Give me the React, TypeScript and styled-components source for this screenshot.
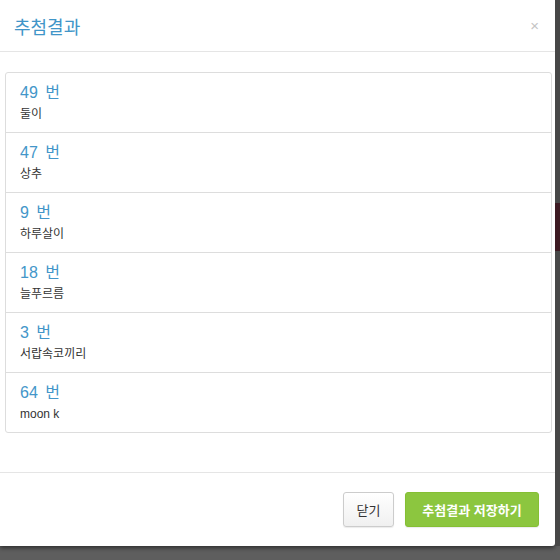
import React from "react";
import styled, { createGlobalStyle } from "styled-components";

const Global = createGlobalStyle`
  html, body { margin: 0; padding: 0; }
  body {
    width: 560px;
    height: 560px;
    overflow: hidden;
    background: #5c5c5c;
    font-family: "Liberation Sans", "Noto Sans CJK KR", sans-serif;
  }
`;

const Backdrop = styled.div`
  display: flex;
  align-items: flex-start;
  width: 560px;
  height: 560px;
  background: #5e5e5e;
`;

const Modal = styled.div`
  width: 555px;
  height: 546px;
  background: #fff;
  display: flex;
  flex-direction: column;
  border-bottom-right-radius: 3px;
  box-shadow: 0 2px 4px rgba(0, 0, 0, 0.5);
  flex-shrink: 0;
`;

const Side = styled.div`
  flex: 1;
  height: 546px;
  background: #474747;
  display: flex;
  flex-direction: column;
`;

const SideBand = styled.div`
  margin-top: 203px;
  height: 48px;
  background: #3d1a22;
`;

const Header = styled.div`
  height: 51px;
  border-bottom: 1px solid #e5e5e5;
  display: flex;
  align-items: center;
  justify-content: space-between;
  padding: 0 16px 0 14px;
`;

const Title = styled.h4`
  margin: 0;
  font-size: 18px;
  font-weight: normal;
  color: #4095c8;
`;

const Close = styled.span`
  font-size: 15px;
  color: #c4c4c4;
  line-height: 1;
`;

const Body = styled.div`
  padding: 20px 3px 39px 5px;
`;

const List = styled.div`
  display: flex;
  flex-direction: column;
  border-radius: 3px;
  border: 1px solid #dddddd;
`;

const Item = styled.div<{ $last?: boolean }>`
  height: ${(p) => (p.$last ? "59px" : "60px")};
  box-sizing: border-box;
  padding: 9px 14px 0;
  border-bottom: ${(p) => (p.$last ? "none" : "1px solid #dddddd")};
  display: flex;
  flex-direction: column;
`;

const Num = styled.div`
  font-size: 16px;
  color: #4396c9;
  line-height: 22px;
  word-spacing: 3px;
`;

const Name = styled.div`
  font-size: 12px;
  color: #333;
  line-height: 18px;
  margin-top: 1px;
`;

const Footer = styled.div`
  border-top: 1px solid #e5e5e5;
  flex: 1;
  display: flex;
  justify-content: flex-end;
  align-items: flex-start;
  padding: 19px 16px 0 0;
  gap: 11px;
`;

const Button = styled.button<{ $primary?: boolean; $w: number }>`
  width: ${(p) => p.$w}px;
  height: 35px;
  padding: 0;
  border-radius: 3px;
  font-family: "Liberation Sans", "Noto Sans CJK KR", sans-serif;
  font-size: 13px;
  font-weight: ${(p) => (p.$primary ? "bold" : "normal")};
  border: 1px solid ${(p) => (p.$primary ? "#85bf34" : "#cccccc")};
  background: ${(p) => (p.$primary ? "#8cc63f" : "linear-gradient(#ffffff, #f0f0f0)")};
  color: ${(p) => (p.$primary ? "#ffffff" : "#333333")};
  box-shadow: 0 1px 1px rgba(0, 0, 0, 0.08);
`;

const winners = [
  { num: 49, name: "둘이" },
  { num: 47, name: "상추" },
  { num: 9, name: "하루살이" },
  { num: 18, name: "늘푸르름" },
  { num: 3, name: "서랍속코끼리" },
  { num: 64, name: "moon k" },
];

export default function App() {
  return (
    <>
      <Global />
      <Backdrop>
        <Modal>
          <Header>
            <Title>추첨결과</Title>
            <Close>×</Close>
          </Header>
          <Body>
            <List>
              {winners.map((w, i) => (
                <Item key={w.num} $last={i === winners.length - 1}>
                  <Num>{w.num} 번</Num>
                  <Name>{w.name}</Name>
                </Item>
              ))}
            </List>
          </Body>
          <Footer>
            <Button $w={51}>닫기</Button>
            <Button $primary $w={134}>추첨결과 저장하기</Button>
          </Footer>
        </Modal>
        <Side>
          <SideBand />
        </Side>
      </Backdrop>
    </>
  );
}
